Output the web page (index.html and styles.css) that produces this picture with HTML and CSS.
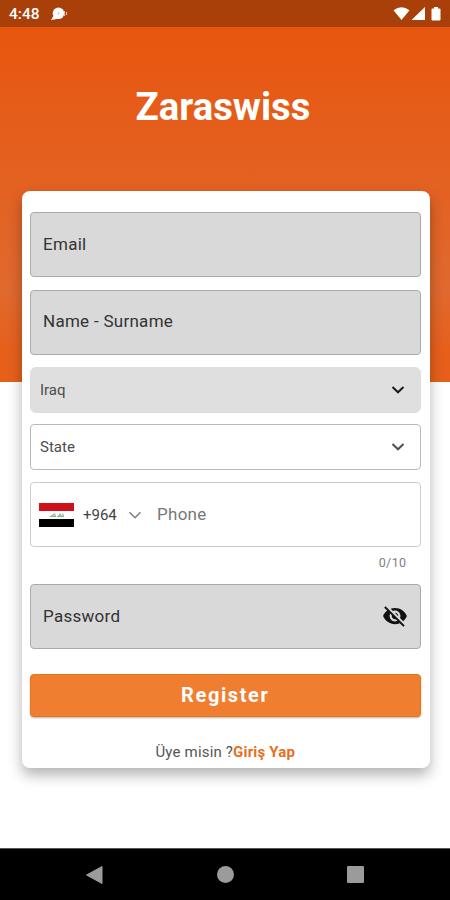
FILE: index.html
```html
<!DOCTYPE html>
<html lang="tr">
<head>
    <meta charset="UTF-8">
    <meta name="viewport" content="width=device-width, initial-scale=1.0">
    <title>Zaraswiss</title>
    <link rel="stylesheet" href="styles.css">
</head>
<body>

    <!-- Status bar -->
    <div class="status-bar">
        <span class="clock">4:48</span>
        <svg class="notification" width="18" height="14" viewBox="0 0 18 14">
            <circle cx="7.500" cy="6.300" r="5.800" fill="#fff"/>
            <path d="M3 8 L0 13 L3.500 12.500 L7 11.500 Z" fill="#fff"/>
            <circle cx="7.500" cy="6.500" r="1.300" fill="#e6d3ca"/>
            <path d="M13.500 4v5M15.500 5v3" stroke="#e0b9a5" stroke-width="1.200"/>
        </svg>
        <svg class="status-icons" width="50" height="16" viewBox="0 0 50 16">
            <path d="M0.500 4.300 Q8.500 -2 16.500 4.300 L8.500 14 Z" fill="#fff"/>
            <path d="M32 1 V14 H18.500 Z" fill="#fff"/>
            <path d="M41 1h4v1.500h1.500q1 0 1 1v10q0 1-1 1h-7q-1 0-1-1v-10q0-1 1-1H41z" fill="#fff"/>
        </svg>
    </div>

    <!-- Header -->
    <div class="header">
        <h1>Zaraswiss</h1>
    </div>

    <!-- Register form -->
    <form class="card">
        <div class="field filled"><span>Email</span></div>
        <div class="field filled"><span>Name - Surname</span></div>

        <div class="select disabled">
            <span>Iraq</span>
            <svg width="14" height="10" viewBox="0 0 14 10"><path d="M1.500 2 L7 7.300 L12.500 2" fill="none" stroke="#1c1c1c" stroke-width="2"/></svg>
        </div>
        <div class="select">
            <span>State</span>
            <svg width="14" height="10" viewBox="0 0 14 10"><path d="M1.500 2 L7 7.300 L12.500 2" fill="none" stroke="#505050" stroke-width="2"/></svg>
        </div>

        <div class="field phone">
            <div class="flag">
                <div class="flag-red"></div>
                <svg width="35" height="8" viewBox="0 0 35 8">
                    <path d="M11 5.500h5.500l-1-2.500-3 2M18 5.500h6.500l-1-3M19.500 5.500l1.500-2.500 1.500 2.500" fill="none" stroke="#7db595" stroke-width="1.100"/>
                </svg>
                <div class="flag-black"></div>
            </div>
            <span class="code">+964</span>
            <svg class="code-arrow" width="14" height="10" viewBox="0 0 14 10"><path d="M1.500 2.300 L7 7.700 L12.500 2.300" fill="none" stroke="#808080" stroke-width="1.600"/></svg>
            <span class="phone-label">Phone</span>
        </div>
        <div class="counter">0/10</div>

        <div class="field filled password">
            <span>Password</span>
            <svg class="eye" width="26" height="26" viewBox="0 0 24 24">
                <path d="M12 7c2.760 0 5 2.240 5 5 0 .650-.130 1.260-.360 1.830l2.920 2.920c1.510-1.260 2.700-2.890 3.430-4.750-1.730-4.390-6-7.500-11-7.500-1.400 0-2.740.250-3.980.700l2.160 2.160C10.740 7.130 11.350 7 12 7zM2 4.270l2.280 2.280.460.460C3.080 8.300 1.780 10.020 1 12c1.730 4.390 6 7.500 11 7.500 1.550 0 3.030-.300 4.380-.840l.420.420L19.730 22 21 20.730 3.270 3 2 4.270zM7.530 9.800l1.550 1.550c-.050.210-.080.430-.080.650 0 1.660 1.340 3 3 3 .220 0 .440-.030.650-.080l1.550 1.550c-.670.330-1.410.530-2.200.530-2.760 0-5-2.240-5-5 0-.790.200-1.530.530-2.200zm4.310-.780l3.150 3.150.020-.160c0-1.660-1.340-3-3-3l-.170.010z" fill="#111"/>
            </svg>
        </div>

        <button type="button" class="register">Register</button>
        <p class="login">Üye misin ?<a class="login-link">Giriş Yap</a></p>
    </form>

    <!-- Android navigation -->
    <div class="nav-bar">
        <svg width="18" height="20" viewBox="0 0 18 20"><path d="M1.500 10 L17 1.500 V18.500 Z" fill="#9b9b9b" stroke="#9b9b9b" stroke-linejoin="round"/></svg>
        <div class="nav-home"></div>
        <div class="nav-recent"></div>
    </div>

</body>
</html>
```

FILE: styles.css
```css
* {
    box-sizing: border-box;
}

body, html {
    margin: 0;
    padding: 0;
    height: 100%;
    overflow: hidden;
    font-family: Roboto, 'Liberation Sans', sans-serif;
}

/* Orange top with the white page under it */
body {
    display: flex;
    flex-direction: column;
    background: linear-gradient(#e8560e 27px, #e0692f 290px, #e6601c 350px) no-repeat #fff;
    background-size: 100% 382px;
}

/* Status bar */
.status-bar {
    display: flex;
    align-items: center;
    height: 27px;
    padding: 0 7px 0 9px;
    background: #a9400a;
    color: #fff;
    flex-shrink: 0;
}

.clock {
    width: 42px;
    font-size: 15.500px;
    font-weight: 500;
    line-height: 27px;
    padding-top: 1px;
}

.status-icons {
    margin-left: auto;
}

/* Header */
.header {
    height: 164px;
    flex-shrink: 0;
    text-align: center;
}

.header h1 {
    margin: 0;
    padding: 56px 4px 0 0;
    font-size: 38.300px;
    line-height: 48px;
    font-weight: bold;
    color: #fff;
}

/* Card */
.card {
    display: flex;
    flex-direction: column;
    flex-shrink: 0;
    width: 407.500px;
    height: 576.500px;
    margin-left: 22px;
    padding: 21px 9px 0 8px;
    background: #fff;
    border-radius: 8px;
    box-shadow: 0 7px 14px rgba(0, 0, 0, 0.3);
}

/* Inputs */
.field {
    display: flex;
    align-items: center;
    height: 65px;
    padding: 0 12px 2px;
    margin-bottom: 12.500px;
    border: 1px solid #ccc;
    border-radius: 4px;
    font-size: 17px;
    letter-spacing: 0.280px;
    color: #333;
}

.filled {
    background: #d9d9d9;
    border-color: #aaa;
}

.select {
    display: flex;
    align-items: center;
    justify-content: space-between;
    height: 46px;
    padding: 0 15px 0 9px;
    margin-bottom: 12px;
    border: 1px solid #b8bab9;
    border-radius: 4px;
    font-size: 15px;
    color: #4d4d4d;
}

.select.disabled {
    margin-bottom: 11px;
    background: #dfdfdf;
    border-color: #dfdfdf;
    border-radius: 6px;
}

/* Phone */
.phone {
    padding: 0 8px;
    margin-bottom: 0;
    color: #777;
}

.phone-label {
    padding-bottom: 2px;
}

.flag {
    width: 35px;
    margin-right: 9px;
}

.flag svg {
    display: block;
}

.flag-red {
    height: 8px;
    background: #d0101b;
}

.flag-black {
    height: 8px;
    background: #000;
}

.code {
    width: 45px;
    font-size: 15px;
    letter-spacing: 0;
    color: #444;
}

.code-arrow {
    margin-right: 15px;
}

.counter {
    height: 37px;
    padding: 7px 14px 0 0;
    font-size: 12.500px;
    line-height: 18px;
    letter-spacing: 0.400px;
    text-align: right;
    color: #808080;
}

/* Password */
.password {
    justify-content: space-between;
    margin-bottom: 25px;
}

/* Button */
.register {
    height: 42.500px;
    flex-shrink: 0;
    padding: 0 0 1px;
    border: 1px solid #e97612;
    border-radius: 4px;
    background: #f07e30;
    box-shadow: 0 1px 2px rgba(0, 0, 0, 0.3);
    font-family: inherit;
    font-size: 20px;
    font-weight: bold;
    letter-spacing: 1.600px;
    color: #fff;
}

.login {
    margin: 26px 0 0;
    font-size: 15px;
    line-height: 18px;
    letter-spacing: 0.180px;
    text-align: center;
    color: #555;
}

.login-link {
    font-weight: bold;
    color: #e96f22;
}

/* Bottom navigation */
.nav-bar {
    display: flex;
    align-items: center;
    justify-content: space-between;
    height: 52px;
    margin-top: auto;
    padding: 0 86px 0 85px;
    border-top: 1px solid #555;
    background: #000;
    flex-shrink: 0;
}

.nav-home {
    width: 17px;
    height: 17px;
    border-radius: 50%;
    background: #9b9b9b;
}

.nav-recent {
    width: 17px;
    height: 17px;
    border-radius: 1px;
    background: #9b9b9b;
}
```
